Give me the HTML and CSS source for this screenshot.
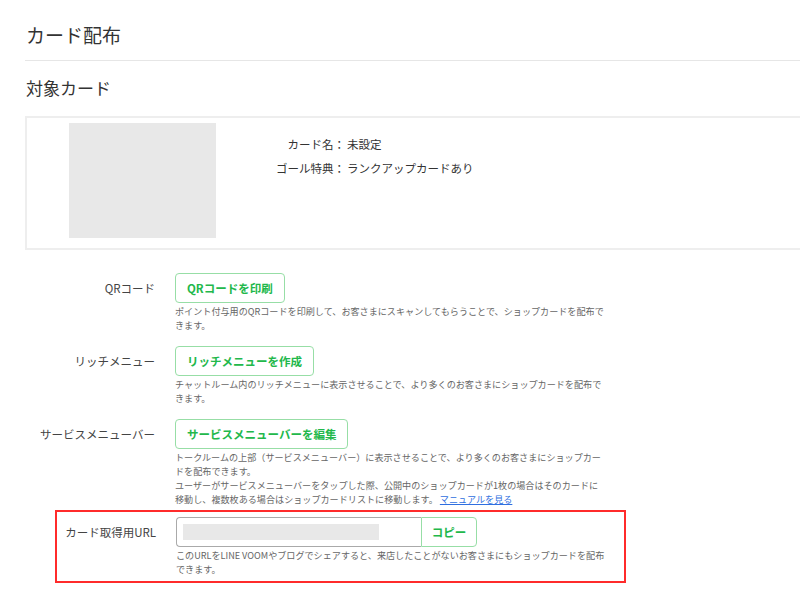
FILE: index.html
```html
<!DOCTYPE html>
<html lang="ja">
<head>
<meta charset="utf-8">
<title>カード配布</title>
<link rel="stylesheet" href="styles.css">
</head>
<body>
<div class="page">
  <header class="page-head">
    <h1 class="page-title">カード配布</h1>
  </header>

  <h2 class="section-title">対象カード</h2>
  <div class="card-box">
    <div class="card-thumb"></div>
    <dl class="card-info">
      <div class="info-row"><dt>カード名：</dt><dd>未設定</dd></div>
      <div class="info-row"><dt>ゴール特典：</dt><dd>ランクアップカードあり</dd></div>
    </dl>
  </div>

  <div class="dist-list">
    <div class="dist-row">
      <div class="dist-label">QRコード</div>
      <div class="dist-body">
        <button class="btn-line">QRコードを印刷</button>
        <p class="dist-desc">ポイント付与用のQRコードを印刷して、お客さまにスキャンしてもらうことで、ショップカードを配布で<br>きます。</p>
      </div>
    </div>
    <div class="dist-row">
      <div class="dist-label">リッチメニュー</div>
      <div class="dist-body">
        <button class="btn-line">リッチメニューを作成</button>
        <p class="dist-desc">チャットルーム内のリッチメニューに表示させることで、より多くのお客さまにショップカードを配布で<br>きます。</p>
      </div>
    </div>
    <div class="dist-row">
      <div class="dist-label">サービスメニューバー</div>
      <div class="dist-body">
        <button class="btn-line">サービスメニューバーを編集</button>
        <p class="dist-desc">トークルームの上部（サービスメニューバー）に表示させることで、より多くのお客さまにショップカー<br>ドを配布できます。<br>ユーザーがサービスメニューバーをタップした際、公開中のショップカードが1枚の場合はそのカードに<br>移動し、複数枚ある場合はショップカードリストに移動します。 <a class="manual-link" href="#">マニュアルを見る</a></p>
      </div>
    </div>
    <div class="dist-row url-row">
      <div class="dist-label">カード取得用URL</div>
      <div class="dist-body">
        <div class="url-group">
          <div class="url-field"><span class="url-mask"></span></div>
          <button class="btn-copy">コピー</button>
        </div>
        <p class="dist-desc">このURLをLINE VOOMやブログでシェアすると、来店したことがないお客さまにもショップカードを配布<br>できます。</p>
      </div>
    </div>
  </div>
</div>
</body>
</html>
```

FILE: styles.css
```css
html, body {
  margin: 0;
  padding: 0;
  background: #ffffff;
  overflow: hidden;
}
body {
  font-family: "Noto Sans CJK JP", "Noto Sans", sans-serif;
  color: #333333;
  width: 800px;
  height: 591px;
}
.page {
  margin-left: 25px;
  width: 775px;
}
.page-head {
  border-bottom: 1px solid #e6e6e6;
  padding: 22px 0 12px 1px;
}
.page-title {
  margin: 0;
  font-size: 19px;
  line-height: 26px;
  font-weight: 400;
  color: #333333;
}
.section-title {
  margin: 0;
  padding: 15px 0 0 1px;
  font-size: 17px;
  line-height: 24px;
  font-weight: 400;
  color: #333333;
}
.card-box {
  margin-top: 16px;
  border: 2px solid #eeeeee;
  border-right: none;
  display: flex;
  padding: 5px 0 10px 42px;
  width: 775px;
  box-sizing: border-box;
}
.card-thumb {
  width: 147px;
  height: 115px;
  background: #e8e8e8;
  flex: none;
}
.card-info {
  margin: 0 0 0 57px;
  padding-top: 9px;
  font-size: 11.5px;
  line-height: 24px;
  color: #333333;
}
.info-row {
  display: flex;
}
.info-row dt {
  width: 72px;
  text-align: right;
}
.info-row dd {
  margin: 0 0 0 2px;
}
.dist-list {
  margin-top: 23px;
  display: flex;
  flex-direction: column;
}
.dist-row {
  display: grid;
  grid-template-columns: 130px 1fr;
  column-gap: 20px;
  margin-bottom: 14px;
}
.dist-label {
  text-align: right;
  font-size: 11.5px;
  line-height: 30px;
  color: #444444;
}
.dist-body {
  display: flex;
  flex-direction: column;
  align-items: flex-start;
}
.btn-line {
  height: 30px;
  padding: 0 11px;
  border: 1px solid #97dea6;
  border-radius: 4px;
  background: #ffffff;
  color: #22b84b;
  font-family: inherit;
  font-size: 11.5px;
  font-weight: 700;
  line-height: 28px;
  cursor: pointer;
}
.dist-desc {
  margin: 1px 0 0;
  font-size: 9.1px;
  line-height: 14px;
  color: #666666;
  white-space: nowrap;
}
.manual-link {
  color: #2f6fe0;
  text-decoration: underline;
}
.url-row {
  margin: -10px 0 0 30px;
  width: 571px;
  box-sizing: border-box;
  border: 2px solid #ff2b2b;
  padding: 5px 0 5px 0;
  grid-template-columns: 99px 1fr;
}
.url-group {
  display: flex;
  height: 30px;
}
.url-field {
  width: 245px;
  box-sizing: border-box;
  border: 1px solid #aaaaaa;
  border-right: none;
  border-radius: 4px 0 0 4px;
  padding: 6px 0 0 6px;
}
.url-mask {
  display: block;
  width: 196px;
  height: 16px;
  background: #e8e8e8;
}
.btn-copy {
  width: 56px;
  height: 30px;
  border: 1px solid #97dea6;
  border-radius: 0 4px 4px 0;
  background: #ffffff;
  color: #22b84b;
  font-family: inherit;
  font-size: 11.5px;
  font-weight: 700;
  padding: 0;
  cursor: pointer;
}
```
